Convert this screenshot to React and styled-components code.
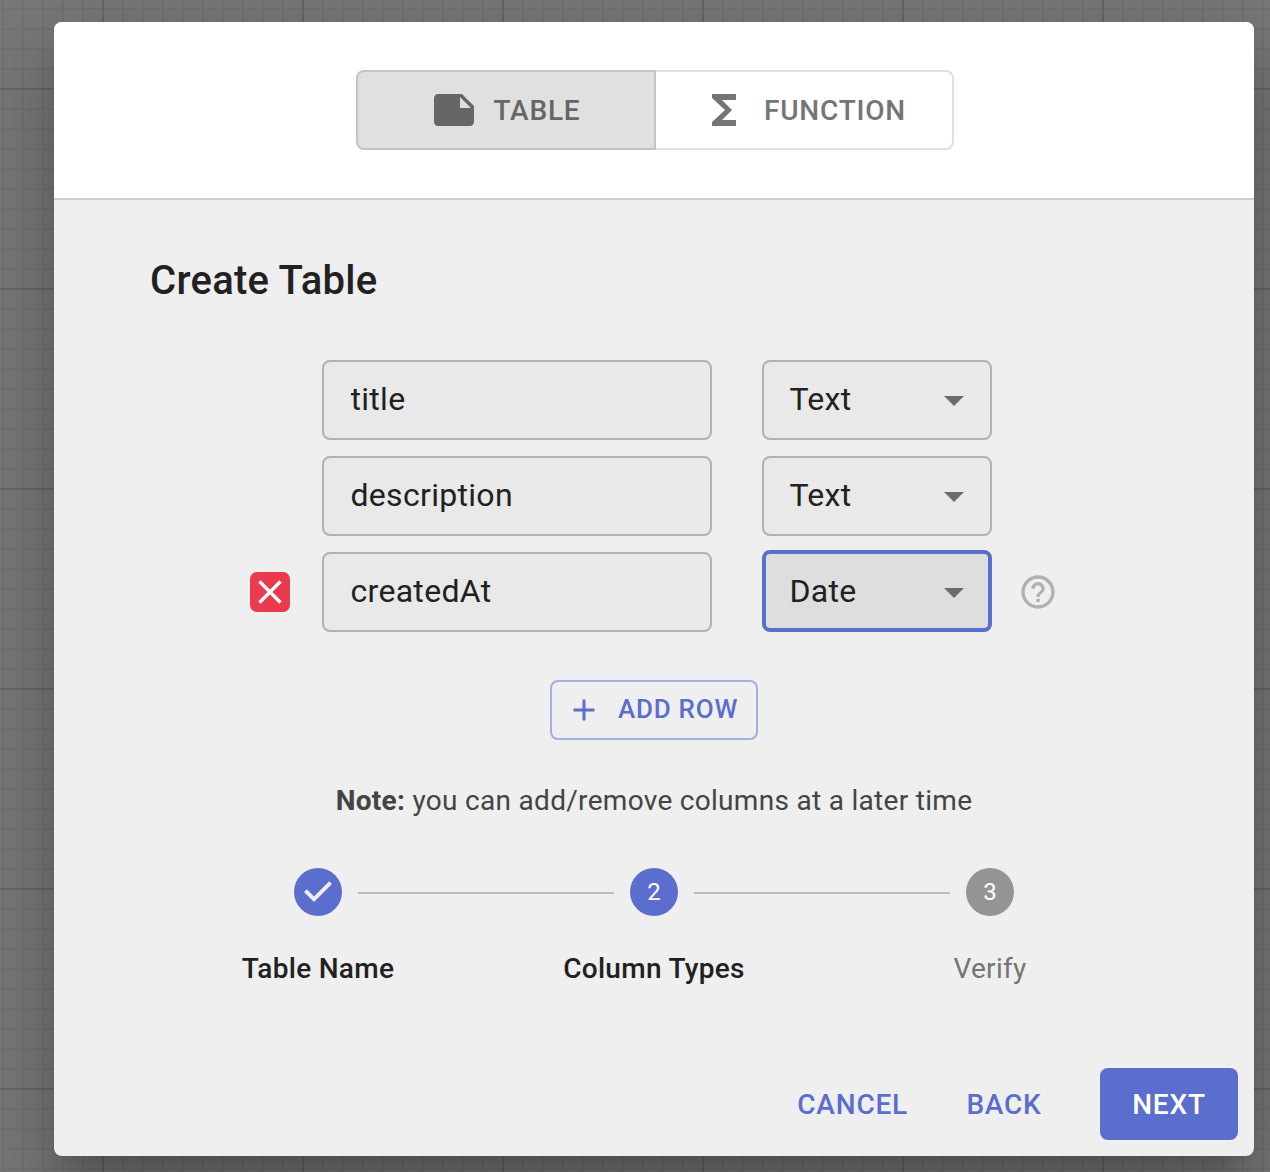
import React, { useState } from "react";
import styled, { createGlobalStyle, css } from "styled-components";

const GlobalStyle = createGlobalStyle`
  * { box-sizing: border-box; }
  body { margin: 0; overflow: hidden; }
  button, input { font: inherit; letter-spacing: inherit; color: inherit; }
`;

const primary = "#5b6dcd";

const Backdrop = styled.div`
  width: 1270px;
  height: 1172px;
  padding: 22px 16px 16px 54px;
  overflow: hidden;
  font-family: Roboto, "Liberation Sans", sans-serif;
  color: #212121;
  background-color: #78797b;
  background-image:
    linear-gradient(90deg, #68686c 2px, transparent 2px),
    linear-gradient(#68686c 2px, transparent 2px),
    linear-gradient(90deg, #727375 2px, transparent 2px),
    linear-gradient(#727375 2px, transparent 2px);
  background-size: 200px 200px, 200px 200px, 20px 20px, 20px 20px;
  background-position: 102px 88px, 102px 88px, 2px 8px, 2px 8px;
`;

const Dialog = styled.div`
  display: flex;
  flex-direction: column;
  width: 1200px;
  height: 1134px;
  border-radius: 8px;
  overflow: hidden;
  background: #efefef;
  box-shadow:
    0 22px 30px -14px rgba(0, 0, 0, 0.2),
    0 48px 76px 6px rgba(0, 0, 0, 0.14),
    0 18px 92px 16px rgba(0, 0, 0, 0.12);
`;

const Header = styled.header`
  display: flex;
  justify-content: center;
  align-items: center;
  height: 178px;
  padding: 0 0 0 2px;
  background: #fff;
  border-bottom: 2px solid #cfcfcf;
`;

const labelType = css`
  font-size: 28px;
  font-weight: 500;
  line-height: 48px;
  letter-spacing: 0.02857em;
  text-transform: uppercase;
`;

const Toggle = styled.button`
  ${labelType}
  display: flex;
  align-items: center;
  justify-content: center;
  gap: 16px;
  width: 300px;
  height: 80px;
  padding: 0 2px 0 0;
  color: ${(p) => (p.$selected ? "#666" : "#757575")};
  background: ${(p) => (p.$selected ? "#e0e0e0" : "#fff")};
  border: 2px solid ${(p) => (p.$selected ? "#c4c4c4" : "#e0e0e0")};

  &:first-child { border-radius: 8px 0 0 8px; position: relative; }
  &:last-child { border-radius: 0 8px 8px 0; margin-left: -2px; }

  span { padding-top: 2px; }
`;

const Icon = styled.svg`
  display: block;
  flex: none;
  width: ${(p) => p.$size}px;
  height: ${(p) => p.$size}px;
  fill: ${(p) => p.$color || "currentColor"};
`;

const Content = styled.main`
  display: flex;
  flex-direction: column;
  align-items: center;
  padding: 48px 96px 0;
`;

const Title = styled.h2`
  align-self: stretch;
  margin: 0 0 46px;
  font-size: 40px;
  font-weight: 500;
  line-height: 66px;
  letter-spacing: 0.007em;
`;

const Rows = styled.div`
  display: grid;
  gap: 16px;
`;

const Row = styled.div`
  display: grid;
  grid-template-columns: 72px 440px 256px 40px;
  align-items: center;
  height: 80px;
  font-size: 32px;
  letter-spacing: 0.00938em;
`;

const RemoveButton = styled.button`
  display: grid;
  place-items: center;
  width: 40px;
  height: 40px;
  padding: 0;
  border: 0;
  border-radius: 7px;
  background: #eb394d;
`;

const Field = styled.input`
  width: 390px;
  height: 80px;
  padding: 0 26px 2px 26.5px;
  border: 2px solid #b1b1b1;
  border-radius: 8px;
  background: #e9e9e9;
  outline: 0;
`;

const Select = styled.button`
  display: flex;
  align-items: center;
  justify-content: space-between;
  width: 230px;
  height: ${(p) => (p.$focused ? 82 : 80)}px;
  margin-top: ${(p) => (p.$focused ? -2 : 0)}px;
  padding: ${(p) => (p.$focused ? "2px 10px 0 23.5px" : "0 12px 0 25.5px")};
  border: ${(p) => (p.$focused ? `4px solid ${primary}` : "2px solid #b1b1b1")};
  border-radius: 8px;
  background: ${(p) => (p.$focused ? "#dedede" : "#e9e9e9")};

  span { padding-bottom: 2px; }
`;

const AddRow = styled.button`
  ${labelType}
  display: flex;
  align-items: center;
  gap: 16px;
  height: 60px;
  width: 208px;
  margin-top: 48px;
  padding: 0 0 0 14px;
  font-size: 26px;
  color: ${primary};
  background: transparent;
  border: 2px solid #a4aee0;
  border-radius: 8px;
  white-space: nowrap;

  span { padding-bottom: 2px; }
`;

const Note = styled.p`
  margin: 40px 0 0;
  font-size: 28px;
  line-height: 42px;
  letter-spacing: 0.01071em;
  color: #444;
  white-space: nowrap;
`;

const Stepper = styled.ol`
  display: flex;
  justify-content: center;
  margin: 46px 0 0;
  padding: 0;
  list-style: none;
`;

const Step = styled.li`
  display: grid;
  grid-template-columns: 1fr 48px 1fr;
  column-gap: 16px;
  row-gap: 32px;
  align-items: center;
  width: 336px;
`;

const Connector = styled.span`
  height: 2px;
  margin-top: 2px;
  background: ${(p) => (p.$hidden ? "transparent" : "#bdbdbd")};
`;

const Dot = styled.span`
  display: flex;
  align-items: center;
  justify-content: center;
  height: 48px;
  border-radius: 50%;
  font-size: 24px;
  color: #fff;
  background: ${(p) => (p.$reached ? primary : "#949494")};
`;

const StepLabel = styled.span`
  grid-column: 1 / -1;
  text-align: center;
  font-size: 28px;
  line-height: 42px;
  letter-spacing: 0.01071em;
  font-weight: ${(p) => (p.$reached ? 500 : 400)};
  color: ${(p) => (p.$reached ? "#212121" : "#757575")};
`;

const Actions = styled.footer`
  display: flex;
  justify-content: flex-end;
  gap: 16px;
  margin-top: auto;
  padding: 16px;
`;

const Action = styled.button`
  ${labelType}
  min-width: 128px;
  height: 72px;
  padding: 2px 16px 0;
  border: 0;
  border-radius: 8px;
  color: ${primary};
  background: transparent;

  ${(p) =>
    p.$filled &&
    css`
      width: 138px;
      margin-left: 16px;
      color: #fff;
      background: ${primary};
    `}
`;

const paths = {
  note: "M22 10l-6-6H4c-1.1 0-2 .9-2 2v12.01c0 1.1.9 1.99 2 1.99l16-.01c1.1 0 2-.89 2-1.99v-8zm-7-4.5l5.5 5.5H15V5.5z",
  sigma: "M18 4H6v2l6.5 6L6 18v2h12v-3h-7l5-5-5-5h7z",
  caret: "M7 10l5 5 5-5z",
  plus: "M19 13h-6v6h-2v-6H5v-2h6V5h2v6h6v2z",
  check: "M10 17l-5-5 1.4-1.4 3.6 3.6 7.6-7.6L19 8l-9 9z",
  help: "M11 18h2v-2h-2v2zm1-16C6.48 2 2 6.48 2 12s4.48 10 10 10 10-4.48 10-10S17.52 2 12 2zm0 18c-4.41 0-8-3.59-8-8s3.59-8 8-8 8 3.59 8 8-3.59 8-8 8zm0-14c-2.21 0-4 1.79-4 4h2c0-1.1.9-2 2-2s2 .9 2 2c0 2-3 1.75-3 5h2c0-2.25 3-2.5 3-5 0-2.21-1.79-4-4-4z",
};

const Glyph = ({ name, size = 48, color }) => (
  <Icon viewBox="0 0 24 24" $size={size} $color={color} aria-hidden="true">
    <path d={paths[name]} />
  </Icon>
);

const columns = [
  { name: "title", type: "Text" },
  { name: "description", type: "Text" },
  { name: "createdAt", type: "Date", active: true },
];

const steps = ["Table Name", "Column Types", "Verify"];
const currentStep = 1;

export default function App() {
  const [mode, setMode] = useState("table");
  return (
    <Backdrop>
      <GlobalStyle />
      <Dialog role="dialog">
        <Header>
          <Toggle $selected={mode === "table"} onClick={() => setMode("table")}>
            <Glyph name="note" />
            <span>Table</span>
          </Toggle>
          <Toggle $selected={mode === "function"} onClick={() => setMode("function")}>
            <Glyph name="sigma" />
            <span>Function</span>
          </Toggle>
        </Header>
        <Content>
          <Title>Create Table</Title>
          <Rows>
            {columns.map((c) => (
              <Row key={c.name}>
                {c.active ? (
                  <RemoveButton aria-label="Remove">
                    <svg width="40" height="40" viewBox="0 0 40 40" aria-hidden="true">
                      <path d="M9.5 9.5l21 21M30.5 9.5l-21 21" stroke="#fff" strokeWidth="3.4" />
                    </svg>
                  </RemoveButton>
                ) : (
                  <span />
                )}
                <Field defaultValue={c.name} />
                <Select $focused={c.active}>
                  <span>{c.type}</span>
                  <Glyph name="caret" color="#6b6b6b" />
                </Select>
                {c.active && <Glyph name="help" size={40} color="#b1b1b1" />}
              </Row>
            ))}
          </Rows>
          <AddRow>
            <Glyph name="plus" size={36} />
            <span>Add row</span>
          </AddRow>
          <Note>
            <b>Note:</b> you can add/remove columns at a later time
          </Note>
          <Stepper>
            {steps.map((label, i) => (
              <Step key={label}>
                <Connector $hidden={i === 0} />
                <Dot $reached={i <= currentStep}>
                  {i < currentStep ? <Glyph name="check" color="#eee" /> : i + 1}
                </Dot>
                <Connector $hidden={i === steps.length - 1} />
                <StepLabel $reached={i <= currentStep}>{label}</StepLabel>
              </Step>
            ))}
          </Stepper>
        </Content>
        <Actions>
          <Action>Cancel</Action>
          <Action>Back</Action>
          <Action $filled>Next</Action>
        </Actions>
      </Dialog>
    </Backdrop>
  );
}
